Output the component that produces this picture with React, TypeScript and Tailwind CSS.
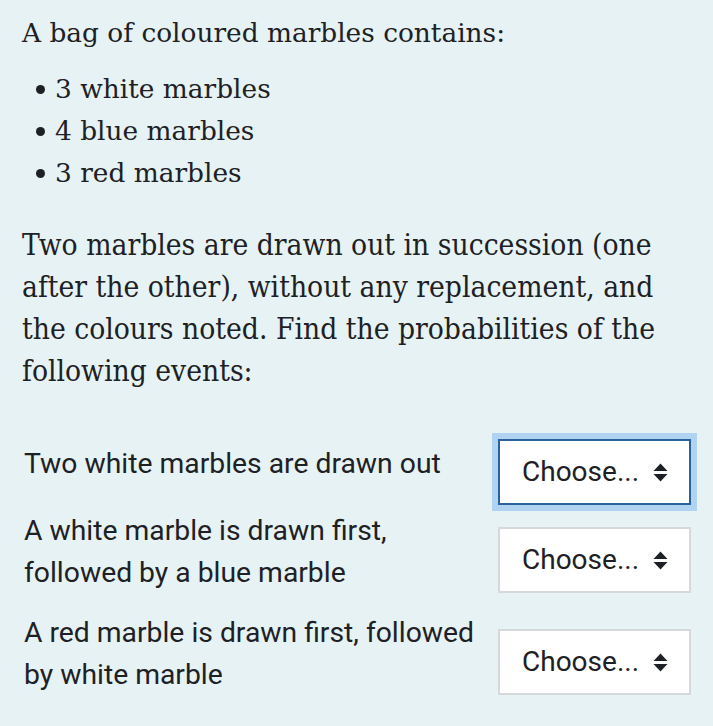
const MARBLES = ["3 white marbles", "4 blue marbles", "3 red marbles"];

interface EventRow {
  label: string;
  focused?: boolean;
  rowClass: string;
}

const EVENTS: EventRow[] = [
  { label: "Two white marbles are drawn out", focused: true, rowClass: "mt-[31px]" },
  { label: "A white marble is drawn first, followed by a blue marble", rowClass: "mt-[5px]" },
  { label: "A red marble is drawn first, followed by white marble", rowClass: "mt-[18px]" },
];

function SortArrows() {
  return (
    <svg className="h-[19px] w-[15px] shrink-0" viewBox="0 0 15 19" aria-hidden="true">
      <path d="M7.5 0.5L14.5 8H0.5Z" fill="#1d2125" />
      <path d="M7.5 18.5L14.5 11H0.5Z" fill="#1d2125" />
    </svg>
  );
}

function ChooseSelect({ focused }: { focused?: boolean }) {
  return (
    <div
      className={
        focused
          ? "ml-[11px] mt-4 flex h-[66px] w-[193px] shrink-0 items-center justify-between border-2 border-[#2b629c] bg-white pl-[22px] pr-[21px] ring-[6px] ring-[#afd3f1]"
          : "ml-[11px] mt-4 flex h-[66px] w-[193px] shrink-0 items-center justify-between border-2 border-[#d5d9dc] bg-white pl-[22px] pr-[21px]"
      }
    >
      <span className="font-['Roboto',sans-serif] text-[28px] leading-none text-[#1d2125]">Choose...</span>
      <SortArrows />
    </div>
  );
}

export default function App() {
  return (
    <div className="min-h-screen bg-[#e6f2f3] px-[22px] pt-3 text-[#1d2125]">
      <p className="font-['DejaVu_Serif',serif] text-[26.4px] leading-[42px]">
        A bag of coloured marbles contains:
      </p>
      <ul className="mt-[14px] font-['DejaVu_Serif',serif] text-[26.4px] leading-[42px]">
        {MARBLES.map((item) => (
          <li key={item} className="flex items-center">
            <span className="ml-[14px] mr-[10px] h-[9px] w-[9px] rounded-full bg-[#1d2125]" />
            {item}
          </li>
        ))}
      </ul>
      <p className="mt-[30px] w-[665px] font-['DejaVu_Serif',serif] text-[29.7px] leading-[42px] [font-stretch:condensed]">
        Two marbles are drawn out in succession (one after the other), without any replacement, and the colours noted. Find the probabilities of the following events:
      </p>
      {EVENTS.map((event) => (
        <div key={event.label} className={`flex items-center ${event.rowClass}`}>
          <p className="ml-[2px] w-[464px] font-['Roboto',sans-serif] text-[28.3px] leading-[42px]">
            {event.label}
          </p>
          <ChooseSelect focused={event.focused} />
        </div>
      ))}
    </div>
  );
}
